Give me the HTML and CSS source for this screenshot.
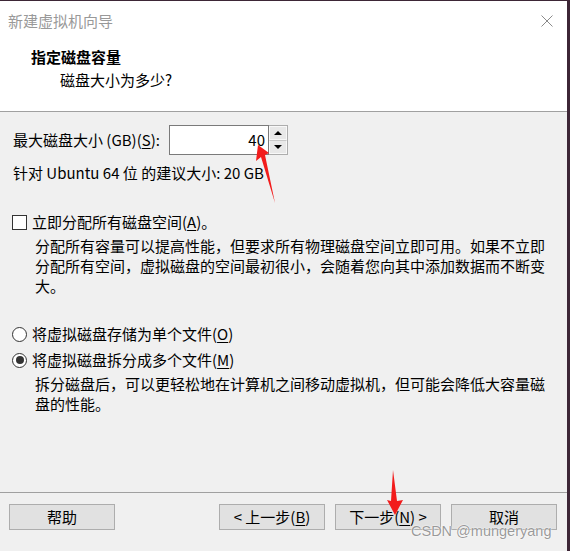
FILE: index.html
```html
<!DOCTYPE html>
<html lang="zh-CN">
<head>
    <meta charset="UTF-8">
    <meta name="viewport" content="width=device-width, initial-scale=1.0">
    <title>新建虚拟机向导</title>
    <link rel="stylesheet" href="styles.css">
</head>
<body>
    <div class="window">
        <div class="header">
            <div class="titlebar">
                <span class="title">新建虚拟机向导</span>
                <svg class="close" width="12" height="12" viewBox="0 0 12 12">
                    <path d="M0.5 0.5 L11.5 11.5 M11.5 0.5 L0.5 11.5" stroke="#8a8a8a" stroke-width="1" fill="none"/>
                </svg>
            </div>
            <div class="heading">指定磁盘容量</div>
            <div class="subheading">磁盘大小为多少?</div>
        </div>

        <div class="content">
            <div class="size-row">
                <span class="size-label">最大磁盘大小 (GB)(<u>S</u>):</span>
                <div class="spinbox">
                    <div class="spin-value">40</div>
                    <div class="spin-buttons">
                        <div class="spin-btn"><span class="tri-up"></span></div>
                        <div class="spin-btn"><span class="tri-down"></span></div>
                    </div>
                </div>
            </div>
            <div class="hint">针对 Ubuntu 64 位 的建议大小: 20 GB</div>

            <div class="option first-option">
                <span class="checkbox"></span>
                <span>立即分配所有磁盘空间(<u>A</u>)。</span>
            </div>
            <p class="desc">分配所有容量可以提高性能，但要求所有物理磁盘空间立即可用。如果不立即分配所有空间，虚拟磁盘的空间最初很小，会随着您向其中添加数据而不断变大。</p>

            <div class="option radio-first">
                <span class="radio"></span>
                <span>将虚拟磁盘存储为单个文件(<u>O</u>)</span>
            </div>
            <div class="option radio-second">
                <span class="radio checked"></span>
                <span>将虚拟磁盘拆分成多个文件(<u>M</u>)</span>
            </div>
            <p class="desc">拆分磁盘后，可以更轻松地在计算机之间移动虚拟机，但可能会降低大容量磁盘的性能。</p>
        </div>

        <div class="footer">
            <button class="btn">帮助</button>
            <div class="btn-group">
                <button class="btn">&lt; 上一步(<u>B</u>)</button>
                <button class="btn">下一步(<u>N</u>) &gt;</button>
                <button class="btn">取消</button>
            </div>
        </div>

        <!-- annotations drawn over the screenshot -->
        <svg class="arrows" width="570" height="551" viewBox="0 0 570 551">
            <polygon points="258,145 269,153 265,155 275,203 261,157 256,161" fill="#f21c1c"/>
            <polygon points="393,470 397,501 403,500 395,515 387,500 391,501" fill="#f21c1c"/>
        </svg>
        <div class="watermark">CSDN @mungeryang</div>
    </div>
</body>
</html>
```

FILE: styles.css
```css
body {
    margin: 0;
    background-color: #f0f0f0;
    font-family: "Noto Sans CJK SC", "Noto Sans", sans-serif;
    font-size: 15px;
    line-height: 20px;
    color: #000;
}
.window {
    position: relative;
    width: 567px;
    height: 550px;
    display: flex;
    flex-direction: column;
    border-top: 1px solid #3d2636;
    border-right: 3px solid #3d2636;
    background-color: #f0f0f0;
}
.header {
    height: 110px;
    background-color: #fff;
    border-bottom: 1px solid #a0a0a0;
}
.titlebar {
    height: 40px;
    display: flex;
    align-items: center;
    justify-content: space-between;
    padding: 0 14px 0 8px;
}
.title {
    color: #999;
}
.heading {
    margin: 6px 0 0 31px;
    font-weight: bold;
}
.subheading {
    margin: 3px 0 0 60px;
}
.content {
    flex: 1;
    padding: 0 13px 0 12px;
}
.size-row {
    display: flex;
    align-items: center;
    margin-top: 13px;
    padding-left: 1px;
}
.size-label {
    width: 156px;
}
.spinbox {
    display: flex;
    height: 30px;
}
.spin-value {
    width: 95px;
    border: 1px solid #7a7a7a;
    background-color: #fff;
    text-align: right;
    padding-right: 3px;
    line-height: 28px;
}
.spin-buttons {
    display: flex;
    flex-direction: column;
    width: 18px;
    border: 1px solid #adadad;
    border-left: none;
}
.spin-btn {
    flex: 1;
    display: flex;
    align-items: center;
    justify-content: center;
    background-color: #e8e8e8;
    border: 1px solid #f8f8f8;
}
.spin-btn + .spin-btn {
    border-top: 1px solid #c8c8c8;
}
.tri-up {
    border-left: 4px solid transparent;
    border-right: 4px solid transparent;
    border-bottom: 4px solid #000;
}
.tri-down {
    border-left: 4px solid transparent;
    border-right: 4px solid transparent;
    border-top: 4px solid #000;
}
.hint {
    margin-top: 8px;
    padding-left: 1px;
}
.option {
    display: flex;
    align-items: center;
    gap: 5px;
}
.first-option {
    margin-top: 29px;
}
.radio-first {
    margin-top: 28px;
}
.radio-second {
    margin-top: 6px;
}
.checkbox {
    width: 13px;
    height: 13px;
    border: 1px solid #333;
    background-color: #fff;
}
.radio {
    width: 13px;
    height: 13px;
    border: 1px solid #333;
    border-radius: 50%;
    background-color: #fff;
    display: flex;
    align-items: center;
    justify-content: center;
}
.radio.checked::after {
    content: "";
    width: 8px;
    height: 8px;
    border-radius: 50%;
    background-color: #333;
}
.desc {
    margin: 4px 0 0 23px;
    width: 516px;
}
u {
    text-decoration: underline;
    text-underline-offset: 2px;
}
.footer {
    height: 47px;
    border-top: 1px solid #a0a0a0;
    display: flex;
    align-items: flex-start;
    justify-content: space-between;
    padding: 11px 10px 0 9px;
}
.btn-group {
    display: flex;
    gap: 10px;
}
.btn {
    width: 106px;
    height: 26px;
    font-family: inherit;
    font-size: 15px;
    line-height: 20px;
    background-color: #e1e1e1;
    border: 1px solid #adadad;
    padding: 0;
    color: #000;
}
.arrows {
    position: absolute;
    left: 0;
    top: -1px;
    pointer-events: none;
}
.watermark {
    position: absolute;
    left: 411px;
    top: 520px;
    white-space: nowrap;
    font-family: "Liberation Sans", Arial, sans-serif;
    font-size: 14.5px;
    color: rgba(120, 120, 120, 0.75);
    text-shadow: 0 0 2px #fff, 0 0 1px #fff;
    pointer-events: none;
}
```
